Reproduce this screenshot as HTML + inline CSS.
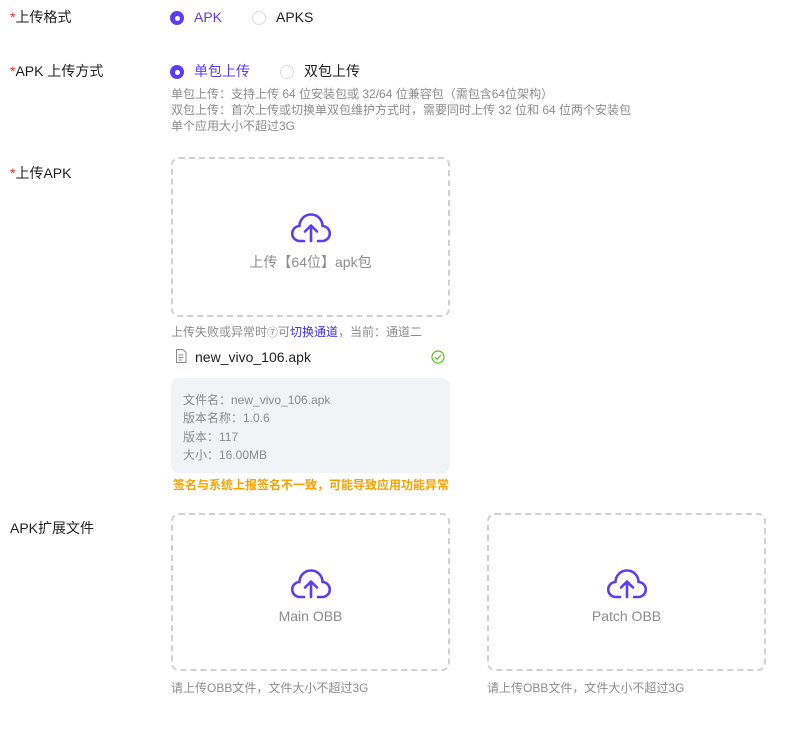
<!DOCTYPE html>
<html><head><meta charset="utf-8"><style>
*{margin:0;padding:0;box-sizing:border-box}
body{width:789px;height:736px;background:#fff;font-family:"Liberation Sans","Noto Sans CJK SC",sans-serif;position:relative;overflow:hidden;color:#1f1f1f}
.a{position:absolute;white-space:nowrap}
.lbl{font-size:14px;color:#1f1f1f;line-height:20px}
.req{color:#f5222d}
.radio{position:absolute;width:14px;height:14px;border-radius:50%}
.on{background:#5b3cf0}
.on::after{content:"";position:absolute;left:4.5px;top:4.5px;width:5px;height:5px;border-radius:50%;background:#fff}
.off{border:1px solid #dcdce8;background:#fff}
.hint{font-size:12px;color:#8c8c8c;line-height:16px}
.box{position:absolute;border:2px dashed #d0cfe0;border-radius:8px}
.box svg{position:absolute;left:50%;transform:translateX(-50%)}
.box .t{position:absolute;left:0;right:0;text-align:center;font-size:14px;color:#8c8c8c}
.info{position:absolute;left:171px;top:378px;width:279px;height:95px;background:#f2f3f7;border-radius:8px}
.info div{position:absolute;left:12px;font-size:12px;color:#8c8c8c;white-space:nowrap}
</style></head><body>
<div class="a lbl" style="left:10px;top:7px"><span class="req">*</span>上传格式</div>
<div class="radio on" style="left:170px;top:11px"></div>
<div class="a lbl" style="left:194px;top:7px;color:#5b3cf0">APK</div>
<div class="radio off" style="left:252px;top:11px"></div>
<div class="a lbl" style="left:276px;top:7px">APKS</div>

<div class="a lbl" style="left:10px;top:61px"><span class="req">*</span>APK 上传方式</div>
<div class="radio on" style="left:170px;top:65px"></div>
<div class="a lbl" style="left:194px;top:61px;color:#5b3cf0">单包上传</div>
<div class="radio off" style="left:280px;top:65px"></div>
<div class="a lbl" style="left:304px;top:61px">双包上传</div>
<div class="a hint" style="left:171px;top:86px">单包上传：支持上传 64 位安装包或 32/64 位兼容包（需包含64位架构）<br>双包上传：首次上传或切换单双包维护方式时，需要同时上传 32 位和 64 位两个安装包<br>单个应用大小不超过3G</div>

<div class="a lbl" style="left:10px;top:163px"><span class="req">*</span>上传APK</div>
<div class="box" style="left:171px;top:157px;width:279px;height:160px">
<svg width="40" height="34" viewBox="0 0 40 34" style="top:51px" fill="none" stroke="#5b3cf0" stroke-width="2.6" stroke-linecap="round" stroke-linejoin="round"><path d="M13 31H9A7.5 7.5 0 0 1 8.5 16 11.5 11.5 0 0 1 31.5 16 7.5 7.5 0 0 1 31 31H27"/><path d="M20 31V16M14 21.5 20 15.5 26 21.5"/></svg>
<div class="t" style="top:93px">上传【64位】apk包</div>
</div>
<div class="a hint" style="left:171px;top:324px">上传失败或异常时<span style="font-size:11px">⑦</span>可<span style="color:#3d2ee6">切换通道</span>，当前：通道二</div>
<svg class="a" style="left:175px;top:349px" width="12" height="14" viewBox="0 0 12 14" fill="none" stroke="#888" stroke-width="1"><path d="M1.5 .5H8L11 3.5V13.5H1.5Z"/><path d="M3.5 6H8.5M3.5 8.5H8.5M3.5 11H7"/></svg>
<div class="a" style="left:195px;top:348px;font-size:14px;line-height:18px">new_vivo_106.apk</div>
<svg class="a" style="left:431px;top:350px" width="14" height="14" viewBox="0 0 14 14" fill="none" stroke="#52c41a" stroke-width="1.2"><circle cx="7" cy="7" r="6"/><path d="M4 7.2 6.2 9.3 10 5"/></svg>
<div class="info">
<div style="top:13px">文件名：new_vivo_106.apk</div>
<div style="top:31px">版本名称：1.0.6</div>
<div style="top:50px">版本：117</div>
<div style="top:68px">大小：16.00MB</div>
</div>
<div class="a" style="left:173px;top:476px;font-size:12px;font-weight:bold;color:#f5a100">签名与系统上报签名不一致，可能导致应用功能异常</div>

<div class="a lbl" style="left:10px;top:518px">APK扩展文件</div>
<div class="box" style="left:171px;top:513px;width:279px;height:158px">
<svg width="40" height="34" viewBox="0 0 40 34" style="top:51px" fill="none" stroke="#5b3cf0" stroke-width="2.6" stroke-linecap="round" stroke-linejoin="round"><path d="M13 31H9A7.5 7.5 0 0 1 8.5 16 11.5 11.5 0 0 1 31.5 16 7.5 7.5 0 0 1 31 31H27"/><path d="M20 31V16M14 21.5 20 15.5 26 21.5"/></svg>
<div class="t" style="top:93px">Main OBB</div>
</div>
<div class="box" style="left:487px;top:513px;width:279px;height:158px">
<svg width="40" height="34" viewBox="0 0 40 34" style="top:51px" fill="none" stroke="#5b3cf0" stroke-width="2.6" stroke-linecap="round" stroke-linejoin="round"><path d="M13 31H9A7.5 7.5 0 0 1 8.5 16 11.5 11.5 0 0 1 31.5 16 7.5 7.5 0 0 1 31 31H27"/><path d="M20 31V16M14 21.5 20 15.5 26 21.5"/></svg>
<div class="t" style="top:93px">Patch OBB</div>
</div>
<div class="a hint" style="left:171px;top:680px">请上传OBB文件，文件大小不超过3G</div>
<div class="a hint" style="left:487px;top:680px">请上传OBB文件，文件大小不超过3G</div>
</body></html>
